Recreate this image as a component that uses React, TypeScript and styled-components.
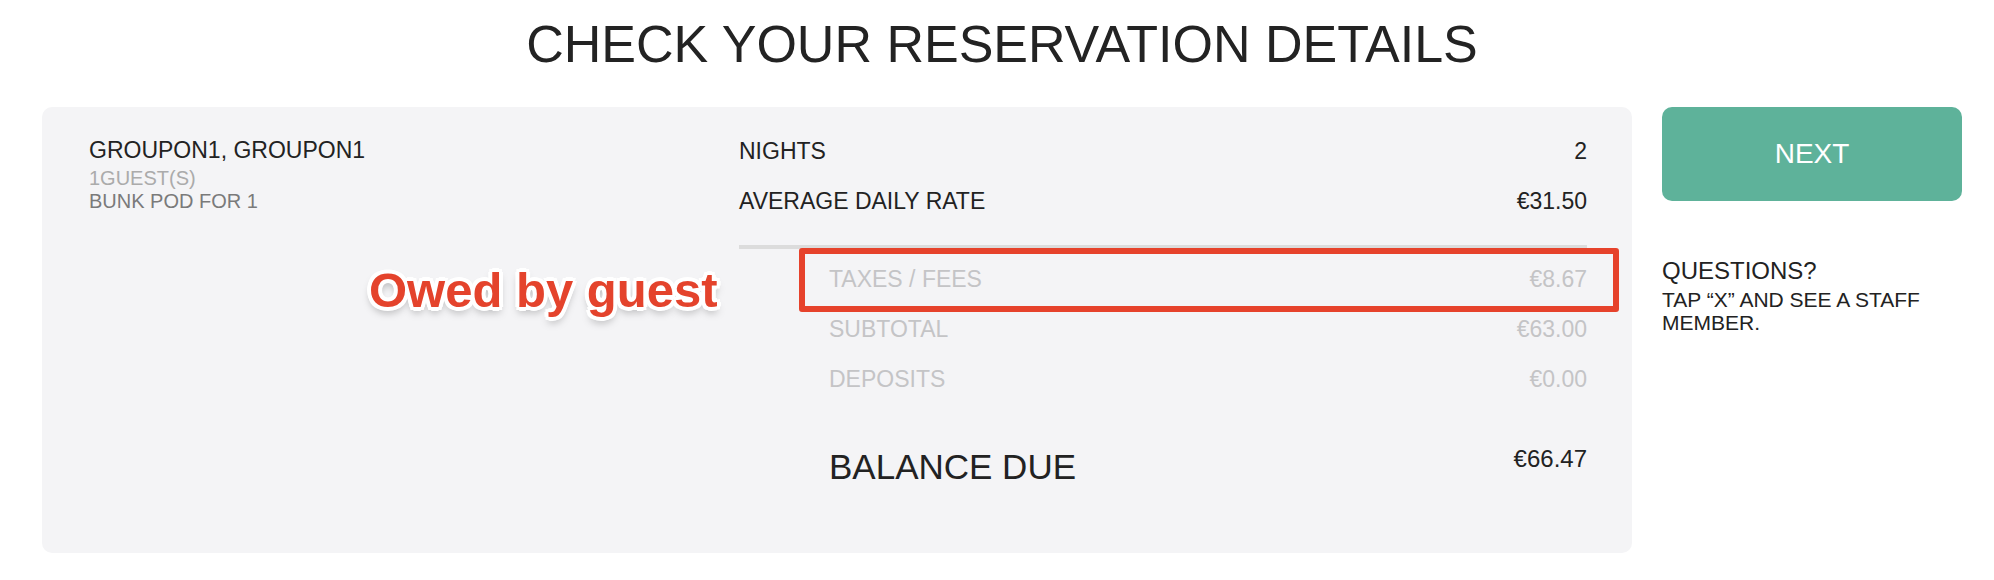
import React from 'react';
import styled, { createGlobalStyle } from 'styled-components';

const GlobalStyle = createGlobalStyle`
  body {
    margin: 0;
    background: #fff;
    font-family: 'Liberation Sans', Arial, sans-serif;
    color: #222;
  }
`;

const Page = styled.main`
  padding: 0 32px 0 42px;
`;

const Title = styled.h1`
  margin: 16px 0 34px;
  font-size: 52px;
  line-height: 57px;
  font-weight: 400;
  text-align: center;
  color: #232323;
`;

const Layout = styled.div`
  display: flex;
  align-items: flex-start;
  gap: 30px;
`;

const Card = styled.section`
  flex: 1;
  height: 446px;
  box-sizing: border-box;
  padding: 19px 45px 0 47px;
  background: #f4f4f6;
  border-radius: 10px;
  display: grid;
  grid-template-columns: 650px 1fr;
`;

const Guest = styled.div`
  padding-top: 10px;
`;

const GuestName = styled.div`
  font-size: 23px;
  line-height: 28px;
  margin-bottom: 3px;
  color: #222;
`;

const GuestLine = styled.div<{ $muted?: boolean }>`
  font-size: 20px;
  line-height: 23px;
  color: ${p => (p.$muted ? '#ababab' : '#7a7a7a')};
`;

const Summary = styled.div`
  display: flex;
  flex-direction: column;
`;

const Row = styled.div<{ $faded?: boolean; $indent?: boolean }>`
  position: relative;
  display: flex;
  justify-content: space-between;
  align-items: center;
  height: 50px;
  padding-left: ${p => (p.$indent ? '90px' : '0')};
  font-size: 23px;
  color: ${p => (p.$faded ? '#c4c4c6' : '#222')};
`;

const Divider = styled.div`
  height: 4px;
  margin: 19px 0 5px;
  background: #dcdcdc;
`;

const BalanceRow = styled.div`
  display: flex;
  justify-content: space-between;
  align-items: flex-start;
  margin-top: 42px;
  padding-left: 90px;
`;

const BalanceLabel = styled.span`
  font-size: 35px;
  line-height: 42px;
  color: #222;
`;

const BalanceValue = styled.span`
  font-size: 24px;
  line-height: 26px;
  color: #222;
`;

const Highlight = styled.div`
  position: absolute;
  top: -6px;
  bottom: -8px;
  left: 60px;
  right: -32px;
  border: 6px solid #e6422b;
  border-radius: 3px;
  pointer-events: none;
`;

const Annotation = styled.div`
  position: absolute;
  top: 11px;
  left: -370px;
  line-height: 50px;
  font-size: 49px;
  font-weight: 700;
  color: #e4432c;
  white-space: nowrap;
  text-shadow:
    4px 0 #fff, -4px 0 #fff, 0 4px #fff, 0 -4px #fff,
    3px 3px #fff, -3px -3px #fff, 3px -3px #fff, -3px 3px #fff,
    0 5px 8px rgba(0, 0, 0, 0.35);
`;

const Sidebar = styled.aside`
  width: 300px;
  flex-shrink: 0;
`;

const NextButton = styled.button`
  display: block;
  width: 100%;
  height: 94px;
  border: 0;
  border-radius: 10px;
  background: #5eb29a;
  color: #fff;
  font-family: inherit;
  font-size: 28px;
`;

const Questions = styled.div`
  margin-top: 56px;
`;

const QuestionsTitle = styled.div`
  font-size: 24px;
  line-height: 28px;
  margin-bottom: 3px;
  color: #222;
`;

const QuestionsText = styled.div`
  font-size: 21px;
  line-height: 23px;
  color: #222;
`;

type Line = { label: string; value: string };

const mainLines: Line[] = [
  { label: 'NIGHTS', value: '2' },
  { label: 'AVERAGE DAILY RATE', value: '€31.50' },
];

const App = () => {
  return (
    <>
      <GlobalStyle />
      <Page>
        <Title>CHECK YOUR RESERVATION DETAILS</Title>
        <Layout>
          <Card>
            <Guest>
              <GuestName>GROUPON1, GROUPON1</GuestName>
              <GuestLine $muted>1GUEST(S)</GuestLine>
              <GuestLine>BUNK POD FOR 1</GuestLine>
            </Guest>
            <Summary>
              {mainLines.map(l => (
                <Row key={l.label}>
                  <span>{l.label}</span>
                  <span>{l.value}</span>
                </Row>
              ))}
              <Divider />
              <Row $faded $indent>
                <span>TAXES / FEES</span>
                <span>€8.67</span>
                <Highlight />
                <Annotation>Owed by guest</Annotation>
              </Row>
              <Row $faded $indent>
                <span>SUBTOTAL</span>
                <span>€63.00</span>
              </Row>
              <Row $faded $indent>
                <span>DEPOSITS</span>
                <span>€0.00</span>
              </Row>
              <BalanceRow>
                <BalanceLabel>BALANCE DUE</BalanceLabel>
                <BalanceValue>€66.47</BalanceValue>
              </BalanceRow>
            </Summary>
          </Card>
          <Sidebar>
            <NextButton>NEXT</NextButton>
            <Questions>
              <QuestionsTitle>QUESTIONS?</QuestionsTitle>
              <QuestionsText>TAP “X” AND SEE A STAFF MEMBER.</QuestionsText>
            </Questions>
          </Sidebar>
        </Layout>
      </Page>
    </>
  );
};

export default App;
